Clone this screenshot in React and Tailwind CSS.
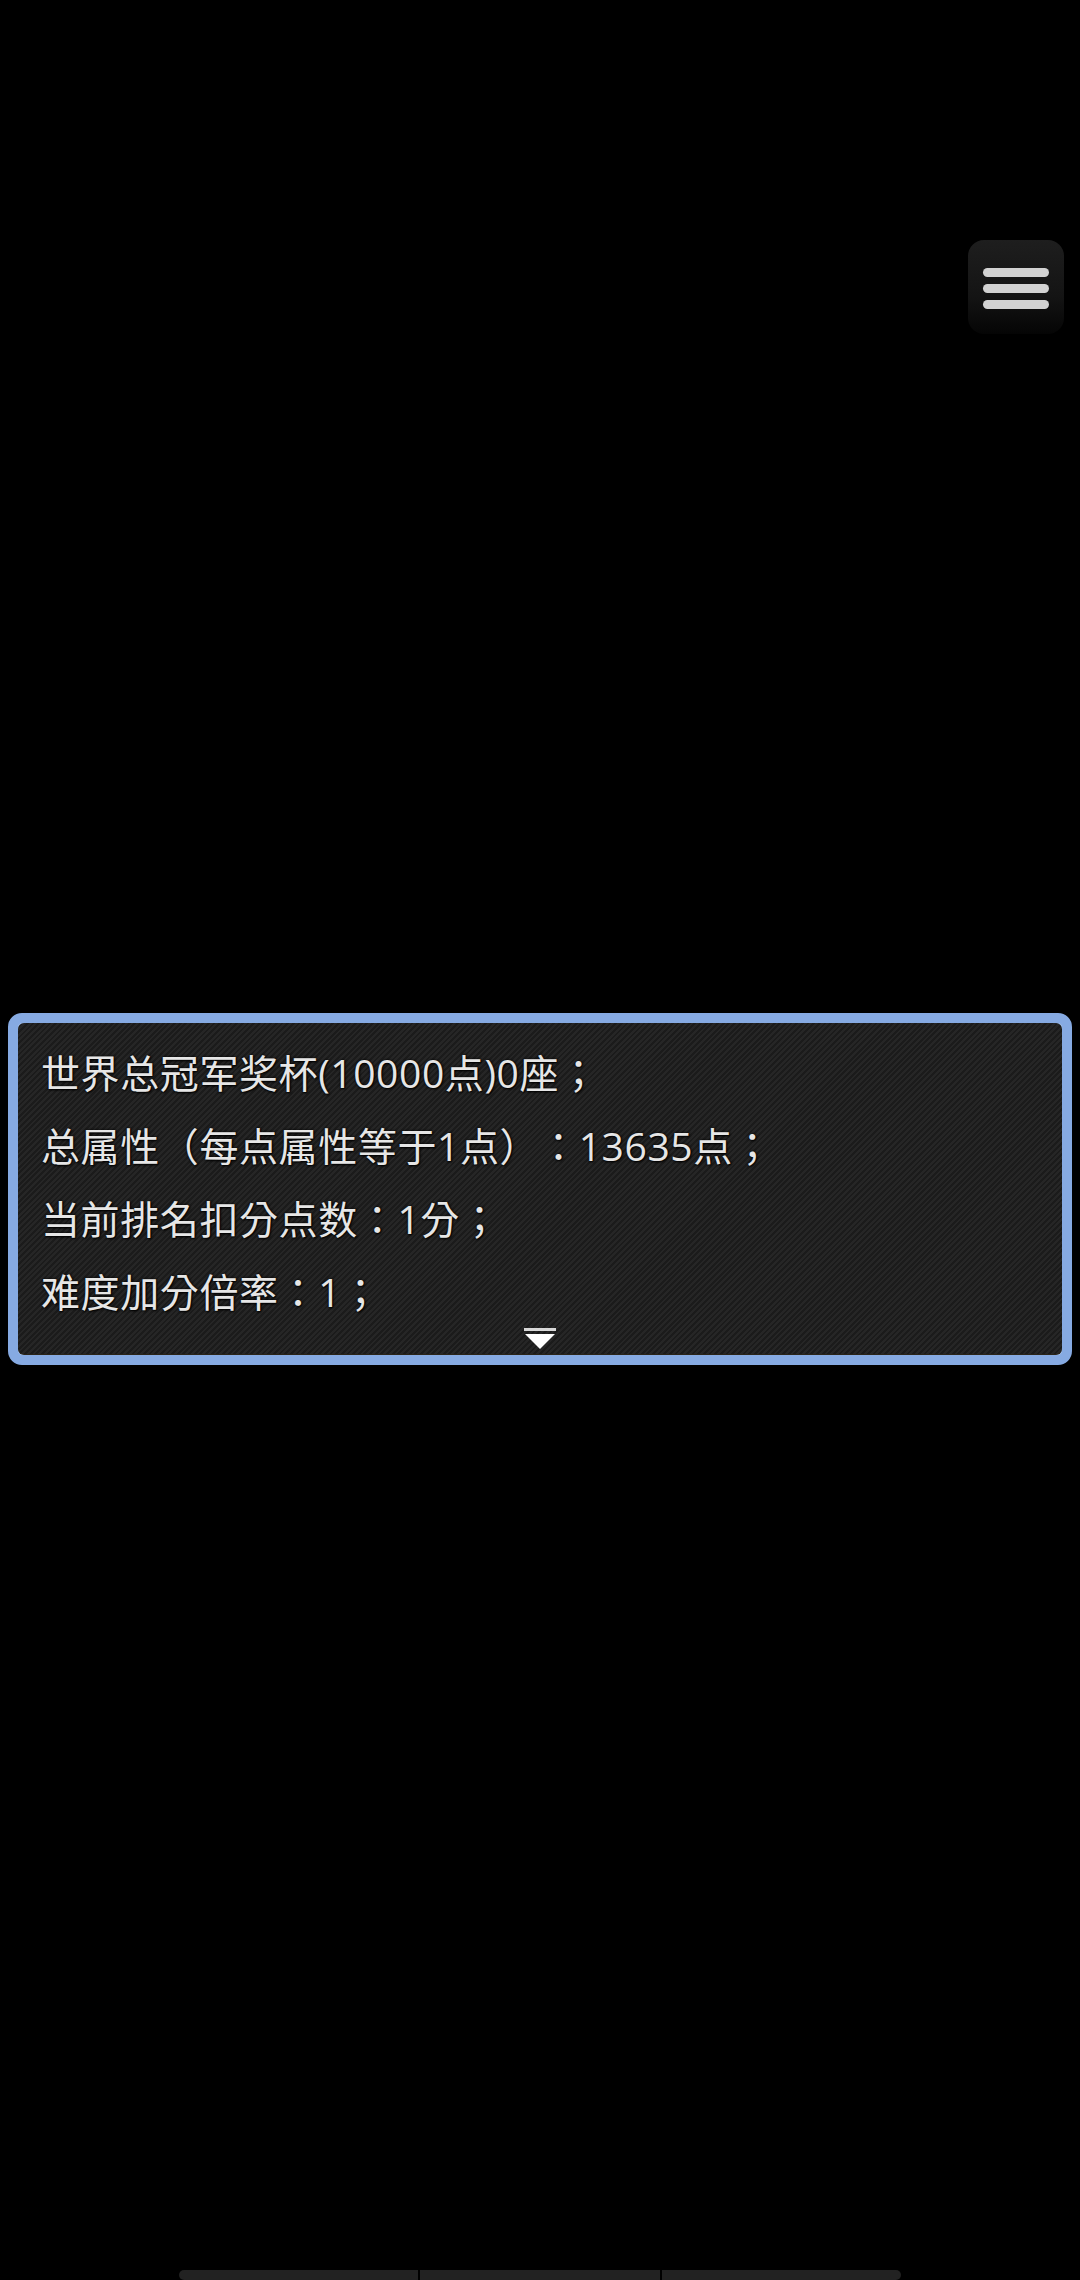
import React from 'react';

const lines = [
  '世界总冠军奖杯(10000点)0座；',
  '总属性（每点属性等于1点）：13635点；',
  '当前排名扣分点数：1分；',
  '难度加分倍率：1；',
];

function MenuButton() {
  return (
    <div className="w-[96px] h-[94px] rounded-[16px] bg-[linear-gradient(180deg,#1e1e1e_0%,#141414_60%,#050505_100%)] flex flex-col items-center pt-[28px] gap-[7px]">
      <div className="w-[66px] h-[9px] rounded-full bg-[#d2d2d2]" />
      <div className="w-[66px] h-[9px] rounded-full bg-[#d2d2d2]" />
      <div className="w-[66px] h-[9px] rounded-full bg-[#d2d2d2]" />
    </div>
  );
}

function MessageBox() {
  return (
    <div className="mx-[8px] rounded-[14px] border-[10px] border-[#86aae2] bg-[#86aae2] shadow-[inset_0_0_0_2px_#a9c6f0]">
      <div className="rounded-[6px] bg-[repeating-linear-gradient(135deg,#262626_0px,#262626_2px,#1b1b1b_2px,#1b1b1b_4px)] pt-[13px] pb-[4px] pl-[23px] border-b border-[#2a2418]">
        {lines.map((t) => (
          <div
            key={t}
            className="text-[39px] leading-[73px] text-[#e6e6e6] whitespace-nowrap [text-spacing-trim:space-all] tracking-[0.6px] [text-shadow:0_0_3px_#000,1px_1px_2px_#000]"
            style={{ fontFamily: '"Open Sans", "Noto Sans CJK TC", sans-serif' }}
          >
            {t}
          </div>
        ))}
        <div className="flex justify-center pr-[23px]">
          <svg width="34" height="22" viewBox="0 0 34 22">
            <rect x="1" y="0" width="32" height="3" fill="#d8d8d8" />
            <path d="M2 6 L32 6 L17 21 Z" fill="#ffffff" />
          </svg>
        </div>
      </div>
    </div>
  );
}

export default function App() {
  return (
    <div className="h-[2280px] bg-black flex flex-col overflow-hidden">
      <div className="pt-[240px] pr-[16px] flex justify-end">
        <MenuButton />
      </div>
      <div className="mt-[679px]">
        <MessageBox />
      </div>
      <div className="mt-auto flex justify-center gap-[2px] pl-[179px] pr-[179px]">
        <div className="flex-1 h-[10px] rounded-l-full bg-[#222222]" />
        <div className="flex-1 h-[10px] bg-[#222222]" />
        <div className="flex-1 h-[10px] rounded-r-full bg-[#222222]" />
      </div>
    </div>
  );
}
